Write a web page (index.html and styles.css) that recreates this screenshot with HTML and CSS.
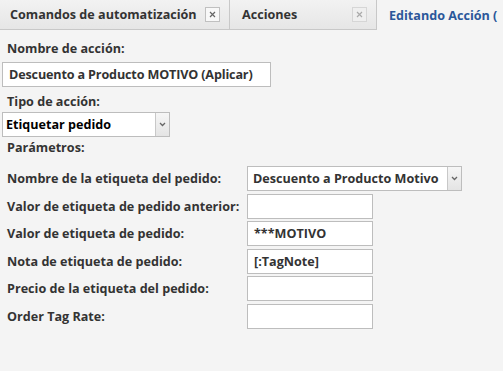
FILE: index.html
```html
<!DOCTYPE html>
<html lang="es">
<head>
    <meta charset="UTF-8">
    <title>Editando Acción</title>
    <link rel="stylesheet" href="styles.css">
</head>
<body>
    <div class="tabs">
        <div class="tab tab-first">
            <span class="tab-title">Comandos de automatización</span>
            <span class="tab-close"><svg width="7" height="7" viewBox="0 0 7 7"><path d="M1 1 L6 6 M6 1 L1 6" stroke="#666" stroke-width="1.2"/></svg></span>
        </div>
        <div class="tab tab-second">
            <span class="tab-title">Acciones</span>
            <span class="tab-close disabled"><svg width="7" height="7" viewBox="0 0 7 7"><path d="M1 1 L6 6 M6 1 L1 6" stroke="#aaa" stroke-width="1.2"/></svg></span>
        </div>
        <div class="tab tab-active">
            <span class="tab-title">Editando Acción (</span>
        </div>
    </div>

    <div class="content">
        <label class="field-label">Nombre de acción:</label>
        <div class="name-box">Descuento a Producto MOTIVO (Aplicar)</div>

        <label class="field-label label-type">Tipo de acción:</label>
        <div class="combo type-combo">
            <span class="combo-text">Etiquetar pedido</span>
            <span class="combo-arrow"><svg width="7" height="5" viewBox="0 0 7 5"><path d="M1 1 L3.5 3.5 L6 1" fill="none" stroke="#666" stroke-width="1.3"/></svg></span>
        </div>

        <label class="field-label label-params">Parámetros:</label>

        <div class="params">
            <span class="param-label">Nombre de la etiqueta del pedido:</span>
            <div class="combo tag-combo">
                <span class="combo-text">Descuento a Producto Motivo</span>
                <span class="combo-arrow"><svg width="7" height="5" viewBox="0 0 7 5"><path d="M1 1 L3.5 3.5 L6 1" fill="none" stroke="#666" stroke-width="1.3"/></svg></span>
            </div>

            <span class="param-label">Valor de etiqueta de pedido anterior:</span>
            <div class="text-box"></div>

            <span class="param-label">Valor de etiqueta de pedido:</span>
            <div class="text-box">***MOTIVO</div>

            <span class="param-label">Nota de etiqueta de pedido:</span>
            <div class="text-box">[:TagNote]</div>

            <span class="param-label">Precio de la etiqueta del pedido:</span>
            <div class="text-box"></div>

            <span class="param-label">Order Tag Rate:</span>
            <div class="text-box"></div>
        </div>
    </div>
</body>
</html>
```

FILE: styles.css
```css
body {
    margin: 0;
    background-color: #f4f4f4;
    font-family: "Open Sans", Arial, sans-serif;
    font-size: 12.6px;
    font-weight: 700;
    color: #333;
    overflow: hidden;
    white-space: nowrap;
}
.tabs {
    display: flex;
    height: 30px;
}
.tab {
    display: flex;
    align-items: center;
    justify-content: space-between;
    background: linear-gradient(#f2f2f2, #e6e6e6);
    border-bottom: 1px solid #c8c8c8;
    border-right: 1px solid #c8c8c8;
    padding: 0 9px 0 10px;
    box-sizing: border-box;
}
.tab-first {
    width: 230px;
}
.tab-second {
    width: 147px;
    padding-left: 12px;
}
.tab-active {
    flex: 1;
    background: #f4f4f4;
    border: none;
    padding-left: 12px;
    color: #2b579a;
    overflow: hidden;
}
.tab-close {
    width: 13px;
    height: 13px;
    border: 1px solid #c0c0c0;
    background: #f8f8f8;
    display: flex;
    align-items: center;
    justify-content: center;
}
.tab-close.disabled {
    border-color: #d6d6d6;
    background: #efefef;
}
.content {
    padding: 9px 2px;
}
.field-label {
    display: block;
    padding-left: 5px;
    height: 20px;
    line-height: 20px;
}
.name-box {
    width: 261px;
    height: 23px;
    line-height: 23px;
    padding-left: 6px;
    margin-top: 3px;
    background: #fff;
    border: 1px solid #bdbdbd;
    letter-spacing: -0.15px;
}
.label-type {
    margin-top: 5px;
}
.label-params {
    margin-top: 1px;
}
.combo {
    display: flex;
    background: #fff;
    border: 1px solid #bdbdbd;
    height: 23px;
}
.combo-text {
    flex: 1;
    line-height: 23px;
    padding-left: 3px;
    color: #000;
    overflow: hidden;
}
.combo-arrow {
    width: 13px;
    border-left: 1px solid #c8c8c8;
    background: linear-gradient(#f6f6f6, #e4e4e4);
    display: flex;
    align-items: center;
    justify-content: center;
}
.type-combo {
    width: 166px;
}
.params {
    display: grid;
    grid-template-columns: 245px auto;
    row-gap: 2.5px;
    align-items: center;
    margin-top: 8px;
}
.param-label {
    padding-left: 5px;
}
.tag-combo {
    width: 213px;
}
.tag-combo .combo-text {
    color: #333;
    padding-left: 5px;
}
.text-box {
    width: 118px;
    height: 23px;
    line-height: 23px;
    padding-left: 6px;
    background: #fff;
    border: 1px solid #bdbdbd;
}
```
